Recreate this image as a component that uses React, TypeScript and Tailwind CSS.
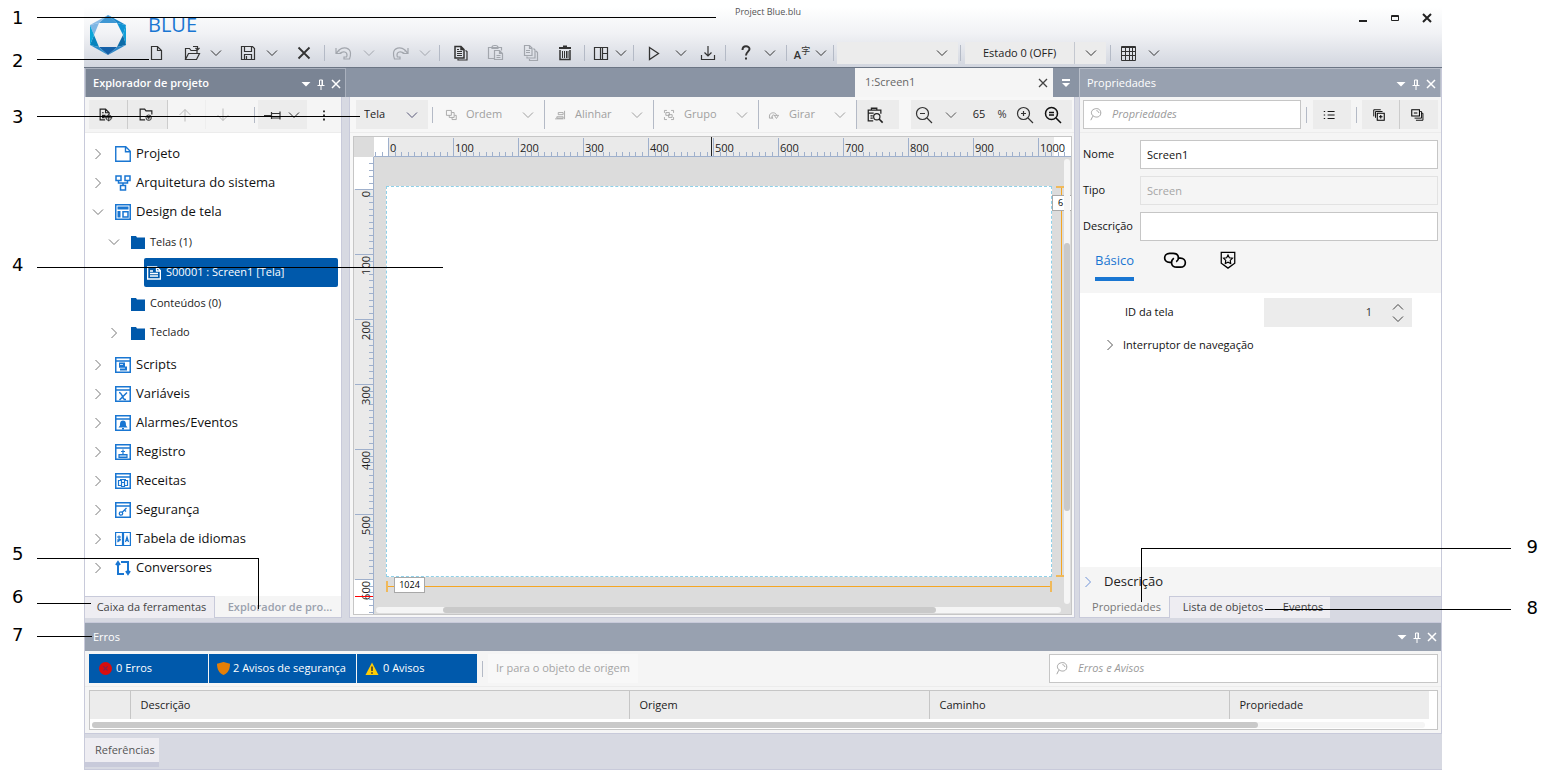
import React from 'react';

type IconName = keyof typeof ICONS;

// Every icon is drawn on a 20x20 grid with one pixel strokes.
const ICONS = {
  chevron: <path d="M5 7.5l5 5 5-5" />,
  chevronUp: <path d="M5 12.5l5-5 5 5" />,
  chevronRight: <path d="M7.5 5l5 5-5 5" />,
  file: <path strokeWidth="1.2" d="M5.5 3.5h6l4 4v9h-10zM11.5 3.5v4h4" />,
  open: <path strokeWidth="1.2" d="M3.5 16.5v-11h4l1.5 2h6v3M3.5 16.5l3-6h11l-3 6zM11 3.5h4.500v3M13.5 5l2 2 2-2" />,
  save: <path strokeWidth="1.2" d="M3.5 3.5h11l2 2v11h-13zM6.5 3.5v5h7v-5M6.5 16.5v-5h7v5M8.5 16v-3" />,
  close: <path strokeWidth="1.8" d="M4.500 4.500l11 11M15.500 4.500l-11 11" />,
  undo: <path strokeWidth="1.2" d="M3 5v5.500h5.500M3.500 10l2.500-3c5-4 11-2 11.500 3 .2 2.500-.5 4.500-1 6h-5.500v-2h3M6 7v1.500M6.500 10.500c4-3 7.500-1.500 7.500 1.500 0 1-.2 1.500-.5 2" />,
  redo: <path strokeWidth="1.2" d="M17 5v5.500h-5.500M16.500 10l-2.500-3c-5-4-11-2-11.500 3-.2 2.500.5 4.500 1 6h5.500v-2h-3M14 7v1.500M13.500 10.500c-4-3-7.500-1.500-7.500 1.500 0 1 .2 1.500.5 2" />,
  copy: (
    <>
      <path strokeWidth="1.5" d="M4 3.500h6l3 3v8.500h-9zM10 3.500v3h3" />
      <path d="M6 6.500h2M6 8.500h5M6 10.500h5M6 12.500h5" />
      <path strokeWidth="1.2" d="M14.500 7.500l1.500 1v8.500h-9v-1" />
    </>
  ),
  paste: <path strokeWidth="1.2" d="M8.5 15.5h-6v-11h13v3M6 4.500c0-1.500 1-2 2.500-2h1c1.500 0 2.500.5 2.500 2v1h-6zM8.500 7.500h5l3 3v6h-8zM13.500 7.500v3h3M10.500 12.500h4M10.500 14.500h4" />,
  pages: <path strokeWidth="1.2" d="M3.500 2.500h5l2.500 2.500v7.500h-7.500zM8.500 2.500v3h2.500M5 7.500h4M5 9.500h4M12.500 5.500l1.500 1.500v8h-8v-1.500M15 8l1.500 1.500v8h-8v-1.500" />,
  trash: (
    <>
      <path strokeWidth="2" d="M4 5h12M8 3.500h4" />
      <path strokeWidth="1.5" d="M5 7v9.500h10v-9.500" />
      <path d="M7.500 8v7M9.500 8v7M11.500 8v7M13 8v7" />
    </>
  ),
  layout: <path strokeWidth="1.2" d="M3.500 4.500h13v12h-13zM9.500 4.500v12M11.500 4.500v12M11.500 10.500h5" />,
  play: <path strokeWidth="1.3" d="M5.500 4.500l9 6-9 6z" />,
  download: <path strokeWidth="1.2" d="M3.500 12v4.500h13v-4.500M10 3v10M6.500 9.500l3.500 3.500 3.500-3.500" />,
  help: <path strokeWidth="2" d="M6.500 7c0-5 7-4.500 7-1 0 2.500-3.500 3-3.500 6.500M10 14.500v2" />,
  grid: <path d="M3.500 3.500h14v14h-14zM3.500 4.500h14M3.500 8.500h14M3.500 12.500h14M7.500 4v13M11.500 4v13M14.500 4v13" />,
  up: <path d="M10 16.500v-12M4.500 10l5.500-5.500 5.500 5.500" />,
  down: <path d="M10 3.500v12M4.500 10l5.500 5.500 5.500-5.500" />,
  pinSide: <path strokeWidth="1.2" d="M0 10.500h7M7.500 7v7M7.500 8.500h8M7.500 13h8M16 6.500v8" />,
  dots: <path strokeWidth="2" d="M10 5v2M10 9.500v2M10 14v2" />,
  newScreen: (
    <>
      <path strokeWidth="1.3" d="M9 15.500h-5.500v-12h6l4 4v2M9.500 3.500v4h4M5.500 7.500h2M5.500 10.500h4M5.500 13h3" />
      <circle cx="13" cy="13" r="3" />
      <path d="M13 9v8M9 13h8" />
    </>
  ),
  newFolder: (
    <>
      <path strokeWidth="1.3" d="M9 15.500h-5.500v-12h5l1.500 2h6.500v4" />
      <circle cx="13" cy="13" r="3" />
      <path d="M13 11v4M11 13h4" />
    </>
  ),
  order: <path strokeWidth="1.2" d="M3.500 3.500h7v7h-7zM11 6.500h3.500v7h-7v-3M15 10.500h2.500v6h-6v-3" />,
  align: <path strokeWidth="1.2" d="M16.500 4v12M7.500 6.500h7v3h-7zM5.500 12.500h9v2h-9zM3 15.500h12" />,
  group: <path strokeWidth="1.2" d="M5.500 6.500h5v4h-5zM9.500 9.500h5v4h-5zM3.500 7v-3.500h3.500M13 3.500h3.500v3.500M3.500 13v3.500h3.500M13 16.500h3.500v-3.500" />,
  rotate: <path strokeWidth="1.2" d="M3.500 14.500v-3c0-6 10-6 10-1M7.500 14.500v-3c0-2 3-2 3-.5M3.500 14.500h4M10.500 10.500h6l-3 4.500zM6 12.500l3 3" />,
  screenSearch: (
    <>
      <path strokeWidth="1.4" d="M8 16.500h-5.500v-12h14v4M6 4.500v-2h6v2M2.500 8h6M5 11h2.500M5 13.500h2.500" />
      <circle cx="12" cy="12" r="3.500" strokeWidth="1.3" />
      <path strokeWidth="1.8" d="M14.500 14.500l4 4" />
    </>
  ),
  zoomOut: (
    <>
      <circle cx="8.5" cy="8.5" r="6" strokeWidth="1.2" />
      <path strokeWidth="1.2" d="M13 13l5 5M6 8.500h5" />
    </>
  ),
  zoomIn: (
    <>
      <circle cx="8.5" cy="8.5" r="6" strokeWidth="1.2" />
      <path strokeWidth="1.2" d="M13 13l5 5M6 8.500h5M8.500 6v5" />
    </>
  ),
  zoomFit: (
    <>
      <circle cx="8.5" cy="8.5" r="6" strokeWidth="1.5" />
      <path strokeWidth="1.5" d="M13 13l5 5M6 7.500h5M6 10h5" />
    </>
  ),
  search: <path strokeWidth="1.1" d="M8 2.500c4-1.500 8 .5 8 5s-4.500 6-8 4.500c-5-2-5-8 0-9.500zM6 11.500l-2.500 5M10.500 4.500c2 .5 3 1.500 3 3" />,
  list: <path strokeWidth="1.3" d="M8 5h10M8 10h10M8 15h10M2.500 5h2M2.500 10h2M2.500 15h2" />,
  expandAll: (
    <>
      <path strokeWidth="1.3" d="M2.500 12v-9.500h10M5 14v-9h10" />
      <path strokeWidth="1.5" d="M7.500 7.500h10v10h-10zM12.500 10v5M10 12.500h5" />
    </>
  ),
  collapseAll: (
    <>
      <path strokeWidth="1.3" d="M14.500 5h2v9.500h-10M16.500 7.500h2v10h-10" />
      <path strokeWidth="1.5" d="M2.500 2.500h11v9h-11zM5.500 7h5" />
    </>
  ),
  link: <path strokeWidth="1.4" d="M7.500 12h-2c-5.500 0-5.500-7.500 0-7.500h3c5 0 5.500 5 2.500 7M12 8.500h2.500c5.500 0 5.500 7.500 0 7.500h-3c-5 0-5.500-5-2.500-7.500" />,
  badge: (
    <>
      <path strokeWidth="1.4" d="M2.500 1.500h15v12l-7.500 5.500-7.500-5.500z" />
      <path strokeWidth="1.3" d="M10 4.500l1.500 3 3.500.5-2.500 2.500.5 3.500-3-1.500-3 1.500.5-3.500-2.500-2.500 3.500-.5z" />
    </>
  ),
};

interface IconProps {
  name: IconName;
  className?: string;
}

const Icon: React.FC<IconProps> = ({ name, className = 'size-5' }) => (
  <svg viewBox="0 0 20 20" fill="none" stroke="currentColor" className={`shrink-0 ${className}`} aria-hidden="true">
    {ICONS[name]}
  </svg>
);

interface ToolProps extends IconProps {
  label: string;
  wrap: string;
}

const Tool: React.FC<ToolProps> = ({ name, label, wrap, className }) => (
  <button type="button" aria-label={label} className={`flex shrink-0 items-center justify-center ${wrap}`}>
    <Icon name={name} className={className} />
  </button>
);

const Sep = ({ className = 'mx-1 h-4' }) => <span className={`w-px shrink-0 bg-[#b4bac6] ${className}`} />;

const Logo = () => (
  <svg viewBox="0 0 36 40" className="h-10 w-9 shrink-0" aria-label="BLUE">
    <path fill="#8abce7" d="M0 10L18 0 9 8z" />
    <path fill="#7fb6e4" d="M0 10L9 8 4 20z" />
    <path fill="#3f97d3" d="M18 0L9 8h18z" />
    <path fill="#1b86c9" d="M18 0l18 10-9-2z" />
    <path fill="#0e93d4" d="M36 10l-9-2 6 12z" />
    <path fill="#0f9fd8" d="M36 10v20l-3-10z" />
    <path fill="#0c6ba8" d="M36 30l-3-10-6 12z" />
    <path fill="#2b86c6" d="M36 30L18 40l9-8z" />
    <path fill="#1560a8" d="M18 40l-9-8h18z" />
    <path fill="#2a8ecb" d="M18 40L0 30l9 2z" />
    <path fill="#0684bd" d="M0 30l9 2-5-12z" />
    <path fill="#0aa6d9" d="M0 10v20l4-10z" />
  </svg>
);

const Header = () => (
  <header className="flex h-17 flex-col border-b border-[#6b7584] bg-linear-to-b from-white from-10% via-[#f1f2f5] via-50% to-[#d2d6df] text-[#333]">
    <div className="relative flex h-10 items-start">
      <div className="absolute left-1.5 top-[15px]">
        <Logo />
      </div>
      <h1 className="ml-16 mt-[13px] text-[20px] leading-6 text-[#1976d2]">BLUE</h1>
      <p className="absolute inset-x-0 top-1 pl-2.5 text-center text-[9px] leading-4 text-[#555]">Project Blue.blu</p>
      <div className="ml-auto mr-[5px] mt-3 flex items-center">
        <button type="button" aria-label="Minimizar" className="flex w-5 justify-center">
          <svg viewBox="0 0 12 12" className="size-3" stroke="#222" strokeWidth="2"><path d="M2 9h8" /></svg>
        </button>
        <button type="button" aria-label="Maximizar" className="ml-3 flex w-5 justify-center">
          <svg viewBox="0 0 12 12" className="size-3" stroke="#222" fill="none"><path d="M2.500 3.500h7v5h-7zM2 4.500h8" /></svg>
        </button>
        <button type="button" aria-label="Fechar" className="ml-3 flex w-5 justify-center">
          <svg viewBox="0 0 12 12" className="size-3" stroke="#222" strokeWidth="2"><path d="M2 2l8 8M10 2l-8 8" /></svg>
        </button>
      </div>
    </div>
    <div className="ml-14 flex h-[26px] items-center">
      <Tool name="file" label="Novo" wrap="w-8" />
      <Tool name="open" label="Abrir" wrap="ml-1 w-8" />
      <Tool name="chevron" label="Abrir recentes" wrap="w-4" />
      <Tool name="save" label="Salvar" wrap="ml-2 w-8" />
      <Tool name="chevron" label="Opções de salvar" wrap="w-4" />
      <Tool name="close" label="Excluir" wrap="ml-2 w-8" />
      <Sep />
      <Tool name="undo" label="Desfazer" wrap="w-7 text-[#a2a6ad]" />
      <Tool name="chevron" label="Lista desfazer" wrap="ml-0.5 w-5 text-[#a2a6ad]" />
      <Tool name="redo" label="Refazer" wrap="ml-1.5 w-8 text-[#a2a6ad]" />
      <Tool name="chevron" label="Lista refazer" wrap="w-4 text-[#a2a6ad]" />
      <Sep className="ml-1.5 mr-[3px] h-4" />
      <Tool name="copy" label="Copiar" wrap="w-[35px]" />
      <Tool name="paste" label="Colar" wrap="w-[35px] text-[#a2a6ad]" />
      <Tool name="pages" label="Duplicar" wrap="w-[35px] text-[#a2a6ad]" />
      <Tool name="trash" label="Lixeira" wrap="w-[34px]" />
      <Sep className="mx-0.5 h-4" />
      <Tool name="layout" label="Layout" wrap="w-7" />
      <Tool name="chevron" label="Opções de layout" wrap="w-3" />
      <Sep className="ml-1.5 mr-1 h-4" />
      <Tool name="play" label="Executar" wrap="w-8" />
      <Tool name="chevron" label="Opções de execução" wrap="w-[22px]" />
      <Tool name="download" label="Baixar" wrap="w-8" />
      <Sep className="ml-px mr-1 h-4" />
      <Tool name="help" label="Ajuda" wrap="w-8" />
      <Tool name="chevron" label="Opções de ajuda" wrap="w-4" />
      <Sep className="ml-2 mr-1 h-4" />
      <button type="button" aria-label="Idioma" className="flex w-[22px] shrink-0 justify-center">
        <span className="mt-1 text-[11px] font-semibold leading-3">A</span>
        <span className="mb-1 font-['Noto_Sans_CJK_SC',sans-serif] text-[9px] leading-3">字</span>
      </button>
      <Tool name="chevron" label="Lista de idiomas" wrap="w-4" />
      <Sep className="ml-1 mr-[3px] h-4" />
      <label className="relative flex h-[22px] w-[121px] items-center bg-[#ececec]">
        <select aria-label="Idioma do texto" className="size-full appearance-none" defaultValue="">
          <option value="" />
        </select>
        <Icon name="chevron" className="pointer-events-none absolute right-1.5 size-5" />
      </label>
      <Sep className="ml-0.5 mr-1 h-4" />
      <label className="relative flex h-[22px] w-[141px] items-center bg-[#ececec]">
        <select aria-label="Estado" className="size-full appearance-none pl-[18px] text-[11px] text-[#222]">
          <option>Estado 0 (OFF)</option>
        </select>
        <span className="pointer-events-none absolute right-0 flex h-full w-8 items-center justify-center border-l border-[#c4c8d0]">
          <Icon name="chevron" />
        </span>
      </label>
      <Sep className="ml-1 mr-[3px] h-4" />
      <Tool name="grid" label="Grade" wrap="w-7" />
      <Tool name="chevron" label="Opções de grade" wrap="w-6" />
    </div>
  </header>
);

const PanelControls = () => (
  <div className="ml-auto flex items-center">
    <button type="button" aria-label="Menu do painel" className="flex w-4 justify-center">
      <svg viewBox="0 0 10 10" className="size-2.5" fill="#fff"><path d="M.5 3h9L5 7.500z" /></svg>
    </button>
    <button type="button" aria-label="Fixar" className="flex w-3.5 justify-center">
      <svg viewBox="0 0 10 12" className="h-3 w-2.5" fill="none" stroke="#fff"><path d="M3.500 7v-5h3v5M6 2v5M1.500 7.500h7M5 8v4" /></svg>
    </button>
    <button type="button" aria-label="Fechar painel" className="flex w-4 justify-center">
      <svg viewBox="0 0 10 10" className="size-2.5" fill="none" stroke="#fff" strokeWidth="1.5"><path d="M1 1l8 8M9 1L1 9" /></svg>
    </button>
  </div>
);

// Glyphs drawn inside the shared window frame of the tree icons.
const TREE_GLYPHS = {
  scripts: <path fill="#1976d2" stroke="none" d="M4 5.500h6v4h2v4H5v-2h5v-.800H4zM5 7v.800h3V7z" />,
  variables: <path strokeWidth="1.5" d="M4 6.500c2 0 2 1 3.500 4s1.500 3 3.500 3M12 6.500L4.500 14" />,
  alarms: <path fill="#1976d2" stroke="none" d="M8 5.500c3 0 3 3 3 5l1.500 2h-9l1.500-2c0-2 0-5 3-5zM7 13h2v1.500H7z" />,
  log: <path strokeWidth="1.2" d="M8 5.500v5M6 7.500h4M4 10.500h8v3H4zM4 12h8" />,
  recipes: <path strokeWidth="1.2" d="M3.500 7.500h3v5h-3zM6.500 9.500h3v4h-3zM9.500 7.500h3v5h-3zM5 6.500h6" />,
  security: (
    <>
      <circle cx="6" cy="11.500" r="1.700" strokeWidth="1.300" />
      <path strokeWidth="1.3" d="M7 10.500l4.500-4.500M9.500 8l1.500 1.500" />
    </>
  ),
};

type GlyphName = keyof typeof TREE_GLYPHS;

const FrameIcon = ({ glyph }: { glyph: GlyphName }) => (
  <svg viewBox="0 0 16 16" className="size-4 shrink-0" fill="none" stroke="#1976d2">
    <path strokeWidth="1.5" d="M.75.75h14.500v14.500H.75z" />
    <path strokeWidth="1.5" d="M1 4h14" />
    {TREE_GLYPHS[glyph]}
  </svg>
);

const blueIcon = (children: React.ReactNode) => (
  <svg viewBox="0 0 16 16" className="size-4 shrink-0" fill="none" stroke="#1976d2">
    {children}
  </svg>
);

const projectIcon = blueIcon(<path strokeWidth="1.4" d="M.75.75h10l4.500 4.500v10H.75zM10.500.75v5h5" />);
const systemIcon = blueIcon(
  <path strokeWidth="1.5" d="M1 1h5v4.500H1zM10 1h5v4.500h-5zM5.500 10.500h5v4.500h-5zM3.500 6v2h9v-2M8 8v2.500" />,
);
const designIcon = blueIcon(
  <>
    <path strokeWidth="1.5" d="M.75.75h14.500v14.500H.75z" />
    <path fill="#1976d2" stroke="none" d="M2.500 2.500h11v3h-11zM2.500 7h3v6.500h-3z" />
    <path strokeWidth="1.5" d="M8 7.700h5v5.200H8z" />
  </>,
);
const languageIcon = blueIcon(
  <>
    <path strokeWidth="1.2" d="M.6 1.500h6.900v13H.6zM8.500 1.500h6.900v13H8.500z" />
    <path strokeWidth="1.2" d="M2 6h4M2 9h4M4 4.500v6M2.500 11l3-3M10.500 11l1.500-5 1.500 5M11 9.500h2" />
  </>,
);
const convertIcon = blueIcon(
  <path strokeWidth="2" d="M1 5l2-3 2 3M3 3v11h6M6 2h7v10M11 11l2 3 2-3" />,
);
const folderIcon = (
  <svg viewBox="0 0 14 14" className="size-3.5 shrink-0" fill="#0059ab"><path d="M0 1h5l1 1.500h8V14H0z" /></svg>
);

interface TreeRowProps {
  icon: React.ReactNode;
  text: string;
  open?: boolean;
}

const TreeRow: React.FC<TreeRowProps> = ({ icon, text, open = false }) => (
  <li className="flex h-[29px] items-center pl-[3px]">
    <Icon name={open ? 'chevron' : 'chevronRight'} className="mr-[7px] size-5 text-[#777]" />
    {icon}
    <span className="ml-[5px] text-[13px] text-[#111]">{text}</span>
  </li>
);

const SECTIONS: { glyph: GlyphName; text: string }[] = [
  { glyph: 'scripts', text: 'Scripts' },
  { glyph: 'variables', text: 'Variáveis' },
  { glyph: 'alarms', text: 'Alarmes/Eventos' },
  { glyph: 'log', text: 'Registro' },
  { glyph: 'recipes', text: 'Receitas' },
  { glyph: 'security', text: 'Segurança' },
];

const ProjectExplorer = () => (
  <aside className="flex w-[262px] shrink-0 flex-col border-l border-[#c8cada]">
    <div className="flex h-[29px] items-center border-x border-t border-[#a9b0bd] bg-[#7a8494] pl-[7px] pr-px pt-px">
      <h2 className="text-[11px] font-semibold text-white">Explorador de projeto</h2>
      <PanelControls />
    </div>
    <div className="mr-1 flex flex-1 flex-col border-r border-[#c8cada]">
      <div className="flex h-9 items-center border-b border-[#ececec] bg-[#f5f5f5] pl-1">
        <Tool name="newScreen" label="Nova tela" wrap="h-[29px] w-[39px] border-r border-[#ccc] bg-[#ececec] pr-1 text-[#222]" className="size-4.5" />
        <Tool name="newFolder" label="Nova pasta" wrap="h-[29px] w-10 border-r border-[#ccc] bg-[#ececec] pr-1 text-[#222]" className="size-4.5" />
        <Tool name="up" label="Mover para cima" wrap="h-[29px] w-[38px] border-r border-[#eee] pr-1 text-[#bbb]" />
        <Tool name="down" label="Mover para baixo" wrap="h-[29px] w-[38px] pr-1 text-[#bbb]" />
        <Sep className="ml-2.5 mr-[3px] h-4" />
        <div className="flex h-[29px] w-[52px] items-center bg-[#ececec] text-[#333]">
          <Tool name="pinSide" label="Posição" wrap="w-7 pl-1" />
          <Tool name="chevron" label="Opções de posição" wrap="w-4" />
        </div>
        <Tool name="dots" label="Mais" wrap="w-[34px] text-[#222]" className="size-4.5" />
      </div>
      <ul className="flex-1 bg-white pt-[6px]">
        <TreeRow icon={projectIcon} text="Projeto" />
        <TreeRow icon={systemIcon} text="Arquitetura do sistema" />
        <TreeRow icon={designIcon} text="Design de tela" open />
        <li>
          <ul className="flex flex-col pb-[3px] pl-[19px] text-[11px] text-[#222]">
            <li className="flex h-8 items-center">
              <Icon name="chevron" className="mr-[7px] size-5 text-[#777]" />
              {folderIcon}
              <span className="ml-[5px]">Telas (1)</span>
            </li>
            <li className="mb-0.5 ml-10 mr-[3px] flex h-[29px] items-center rounded-xs bg-[#0059ab] pl-[3px] text-white">
              <svg viewBox="0 0 14 14" className="size-3.5" fill="none" stroke="#fff">
                <path strokeWidth="1.3" d="M.65 1h9l3.700 3.500v8.500H.65zM9.500 1v4h4M3 5h3M3 7.500h8M3 10h8" />
              </svg>
              <span className="ml-[5px]">S00001 : Screen1 [Tela]</span>
            </li>
            <li className="flex h-[29px] items-center pl-[27px]">
              {folderIcon}
              <span className="ml-[5px]">Conteúdos (0)</span>
            </li>
            <li className="flex h-[29px] items-center">
              <Icon name="chevronRight" className="mr-[7px] size-5 text-[#777]" />
              {folderIcon}
              <span className="ml-[5px]">Teclado</span>
            </li>
          </ul>
        </li>
        {SECTIONS.map((s) => (
          <TreeRow key={s.text} icon={<FrameIcon glyph={s.glyph} />} text={s.text} />
        ))}
        <TreeRow icon={languageIcon} text="Tabela de idiomas" />
        <TreeRow icon={convertIcon} text="Conversores" />
      </ul>
    </div>
    <div className="mb-1 flex h-[22px] text-[11px]">
      <button type="button" className="w-[130px] whitespace-nowrap border-r border-t border-[#c8cada] bg-[#eeedf2] pl-1 text-[#444]">
        Caixa da ferramentas
      </button>
      <button type="button" className="w-[127px] whitespace-nowrap border-b border-r border-[#c8cada] bg-[#f5f5f5] pl-1 pt-px font-semibold text-[#9aa1ad]">
        Explorador de pro...
      </button>
    </div>
  </aside>
);

interface DisabledMenuProps {
  icon: IconName;
  text: string;
  wrap: string;
}

const DisabledMenu: React.FC<DisabledMenuProps> = ({ icon, text, wrap }) => (
  <button type="button" disabled className={`flex h-[29px] shrink-0 items-center border-r border-[#b4bac6] pl-2 text-[#a0a0a0] ${wrap}`}>
    <Icon name={icon} className="mr-2 size-3.5" />
    {text}
    <Icon name="chevron" className="ml-auto mr-1.5 size-5" />
  </button>
);

const SCALE = 65;
const MAJORS = [0, 1, 2, 3, 4, 5, 6, 7, 8, 9, 10];

const HorizontalRuler = () => (
  <svg className="h-5 w-full border-b border-[#9fb0cc]" shapeRendering="crispEdges">
    <rect width="100%" height="20" fill="#fff" />
    <rect x="14" width="666" height="20" fill="#eaeaea" />
    {Array.from({ length: 108 }, (_, i) => Math.round(14 + (i - 2) * 6.5)).map((x) => (
      <path key={x} d={`M${x}.5 15v5`} stroke="#9fb0cc" />
    ))}
    {MAJORS.map((m) => (
      <g key={m}>
        <path d={`M${m * SCALE + 14}.5 1v19`} stroke="#9fb0cc" />
        <text x={m * SCALE + 16} y="15" fontSize="11" fill="#222">{m * 100}</text>
      </g>
    ))}
    <path d="M337.500 0v20" stroke="#222" />
  </svg>
);

const VerticalRuler = () => (
  <svg className="h-full w-5 border-r border-[#9fb0cc]" shapeRendering="crispEdges">
    <rect width="20" height="100%" fill="#fff" />
    <rect y="32" width="20" height="391" fill="#eaeaea" />
    {Array.from({ length: 70 }, (_, i) => Math.round(32 + (i - 4) * 6.5)).map((y) => (
      <path key={y} d={`M15 ${y}.5h5`} stroke="#9fb0cc" />
    ))}
    {MAJORS.slice(0, 7).map((m) => (
      <g key={m}>
        <path d={`M1 ${m * SCALE + 32}.5h19`} stroke="#9fb0cc" />
        <text transform={`translate(16 ${m * SCALE + 34}) rotate(-90)`} textAnchor="end" fontSize="11" fill="#222">
          {m * 100}
        </text>
      </g>
    ))}
    <path d="M1 439.500h19" stroke="#f00" />
  </svg>
);

const Editor = () => (
  <section className="flex min-w-0 flex-1 flex-col">
    <div className="flex h-[29px] bg-[#8a94a4]">
      <div className="ml-auto flex w-[198px] items-center bg-[#f5f5f5] pl-2.5 pr-1 text-[11px] text-[#666]">
        1:Screen1
        <button type="button" aria-label="Fechar aba" className="ml-auto text-[#444]">
          <svg viewBox="0 0 12 12" className="size-3" fill="none" stroke="currentColor" strokeWidth="1.3"><path d="M2 2l8 8M10 2l-8 8" /></svg>
        </button>
      </div>
      <button type="button" aria-label="Lista de abas" className="flex w-[26px] items-center justify-center">
        <svg viewBox="0 0 10 10" className="size-2.5" fill="#fff"><path d="M1 1h8v2H1zM1 5h8L5 9z" /></svg>
      </button>
    </div>
    <div className="mb-1 ml-[3px] mr-1 flex flex-1 flex-col border-x border-b border-[#c8cada] bg-[#f7f7f7]">
      <div className="flex h-9 items-center border-b border-[#ececec] text-[11px]">
        <label className="relative ml-1.5 flex h-[29px] w-[72px] shrink-0 items-center bg-[#ececec]">
          <select aria-label="Modo de edição" className="size-full appearance-none pl-2 text-[#222]">
            <option>Tela</option>
          </select>
          <Icon name="chevron" className="pointer-events-none absolute right-1.5 size-5 text-[#557]" />
        </label>
        <Sep className="ml-1 mr-[3px] h-4" />
        <DisabledMenu icon="order" text="Ordem" wrap="w-[109px]" />
        <DisabledMenu icon="align" text="Alinhar" wrap="w-[109px]" />
        <DisabledMenu icon="group" text="Grupo" wrap="w-[105px]" />
        <DisabledMenu icon="rotate" text="Girar" wrap="w-[98px]" />
        <Tool name="screenSearch" label="Pré-visualizar" wrap="h-[29px] w-[42px] bg-[#ececec] pr-1.5 text-[#222]" className="size-4.5" />
        <div className="ml-auto mr-0.5 flex h-[29px] items-center bg-[#ececec] pr-[5px] text-[#333]">
          <Tool name="zoomOut" label="Reduzir" wrap="w-[26px]" />
          <Tool name="chevron" label="Níveis de zoom" wrap="w-7 text-[#555]" />
          <input aria-label="Zoom" defaultValue="65" className="w-7 text-center text-[#222]" />
          <span className="w-[18px] text-center">%</span>
          <Tool name="zoomIn" label="Ampliar" wrap="w-7" />
          <Tool name="zoomFit" label="Ajustar" wrap="w-7 text-[#111]" />
        </div>
      </div>
      <div className="mb-0.5 ml-[3px] mr-0.5 mt-[3px] grid flex-1 grid-cols-[20px_minmax(0,1fr)] grid-rows-[20px_minmax(0,1fr)] border border-[#c6c6c6] bg-[#dcdcdc]">
        <span />
        <HorizontalRuler />
        <VerticalRuler />
        <div className="relative min-h-[456px] overflow-hidden">
          <div className="absolute left-3 top-[29px] h-[391px] w-[666px] border border-dashed border-[#8fd0e8] bg-white" />
          {/* dimension lines */}
          <div className="absolute left-3 top-[429px] h-px w-[666px] bg-[#f5a623]" />
          <div className="absolute left-3 top-[424px] h-[11px] w-0.5 bg-[#f0b95a]" />
          <div className="absolute left-[676px] top-[424px] h-[11px] w-0.5 bg-[#f0b95a]" />
          <div className="absolute left-5 top-[420px] flex h-4 w-[31px] items-center justify-center border border-[#a8a8a8] bg-white text-[9px]">1024</div>
          <div className="absolute left-[687px] top-[29px] h-[391px] w-px bg-[#f5a623]" />
          <div className="absolute left-[682px] top-[29px] h-0.5 w-[11px] bg-[#f0b95a]" />
          <div className="absolute left-[682px] top-[418px] h-0.5 w-[11px] bg-[#f0b95a]" />
          <div className="absolute left-[678px] top-[38px] flex h-4 w-6 items-center border border-[#a8a8a8] bg-white pl-[5px] text-[9px]">6</div>
          {/* scroll bars */}
          <div className="absolute bottom-2.5 right-px top-0.5 w-1.5 rounded-full bg-[#f5f5f5]">
            <div className="mt-[84px] h-[268px] rounded-full bg-[#c9c9c9]" />
          </div>
          <div className="absolute bottom-px left-0.5 right-2.5 h-1.5 rounded-full bg-[#f5f5f5]">
            <div className="ml-[67px] h-full w-[493px] rounded-full bg-[#c9c9c9]" />
          </div>
        </div>
      </div>
    </div>
  </section>
);

interface SearchBoxProps {
  id: string;
  placeholder: string;
  className: string;
}

const SearchBox: React.FC<SearchBoxProps> = ({ id, placeholder, className }) => (
  <label htmlFor={id} className={`flex h-[29px] items-center border border-[#c6c6c6] bg-white pl-1 ${className}`}>
    <Icon name="search" className="size-4 text-[#999]" />
    <input id={id} placeholder={placeholder} className="ml-2 min-w-0 flex-1 text-[11px] italic outline-none placeholder:text-[#9a9a9a]" />
  </label>
);

const Properties = () => (
  <aside className="flex w-[363px] shrink-0 flex-col border-r border-[#c8cada]">
    <div className="flex h-[29px] items-center border-x border-t border-[#b9bfca] bg-[#98a1b0] pl-[7px] pr-px pt-px">
      <h2 className="text-[11px] text-white">Propriedades</h2>
      <PanelControls />
    </div>
    <div className="flex flex-1 flex-col border-l border-[#c8cada] bg-[#f5f5f5]">
      <div className="flex h-9 shrink-0 items-center border-b border-[#ececec] pl-[3px] pr-[3px]">
        <SearchBox id="prop-search" placeholder="Propriedades" className="min-w-0 flex-1" />
        <Sep className="ml-[5px] mr-1.5 h-4" />
        <Tool name="list" label="Lista" wrap="h-[29px] w-[38px] bg-[#ececec] pr-1.5" className="size-3.5" />
        <Sep className="mx-[5px] h-4" />
        <Tool name="expandAll" label="Expandir tudo" wrap="h-[29px] w-[38px] border-r border-[#ccc] bg-[#ececec] pr-1" className="size-3.5" />
        <Tool name="collapseAll" label="Recolher tudo" wrap="h-[29px] w-[38px] bg-[#ececec] pr-1" className="size-3.5" />
      </div>
      <div className="grid grid-cols-[57px_1fr] items-center gap-y-[7px] py-[7px] pl-[3px] pr-[3px] text-[11px] text-[#111]">
        <label htmlFor="nome">Nome</label>
        <input id="nome" defaultValue="Screen1" className="h-[29px] min-w-0 border border-[#c6c6c6] bg-white px-1.5" />
        <label htmlFor="tipo">Tipo</label>
        <input id="tipo" defaultValue="Screen" disabled className="h-[29px] min-w-0 border border-[#e2e2e2] px-1.5 text-[#a5a5a5]" />
        <label htmlFor="descricao">Descrição</label>
        <input id="descricao" className="h-[29px] min-w-0 border border-[#c6c6c6] bg-white px-1.5" />
      </div>
      <div className="flex h-[45px] items-start pl-[15px]">
        <button type="button" className="h-[33px] border-b-4 border-[#1976d2] pb-1 text-[13px] text-[#1976d2]">Básico</button>
        <Tool name="link" label="Vínculos" wrap="ml-[29px] mt-0.5 h-5" className="size-6" />
        <Tool name="badge" label="Segurança" wrap="ml-8 mt-0.5 h-5" className="size-4.5" />
      </div>
      <div className="flex flex-1 flex-col bg-white pt-[5px] text-[11px] text-[#111]">
        <div className="flex h-[29px] items-center pl-[45px]">
          <label htmlFor="tela-id" className="flex-1">ID da tela</label>
          <div className="mr-[29px] flex h-full w-[148px] items-center bg-[#ececec]">
            <input id="tela-id" defaultValue="1" className="min-w-0 flex-1 text-right text-[#333]" />
            <div className="ml-4 mr-1 flex flex-col text-[#444]">
              <button type="button" aria-label="Aumentar" className="h-3 overflow-hidden"><Icon name="chevronUp" className="-my-1 size-5" /></button>
              <button type="button" aria-label="Diminuir" className="h-3 overflow-hidden"><Icon name="chevron" className="-my-1 size-5" /></button>
            </div>
          </div>
        </div>
        <button type="button" className="mt-1 flex h-7 items-center pl-5 text-left">
          <Icon name="chevronRight" className="mr-[3px] size-5 text-[#555]" />
          Interruptor de navegação
        </button>
      </div>
      <button type="button" className="flex h-[29px] shrink-0 items-center text-[13px] text-[#222]">
        <Icon name="chevronRight" className="-ml-0.5 mr-1.5 size-5 text-[#6f93d8]" />
        Descrição
      </button>
    </div>
    <div className="mb-1 flex h-[22px] text-[11px] text-[#444]">
      <button type="button" className="w-[90px] border-b border-l border-[#c8cada] bg-[#f5f5f5] pl-1 pt-px text-[#777]">Propriedades</button>
      <button type="button" className="w-[107px] border-l border-t border-[#c8cada] bg-[#eeedf2]">Lista de objetos</button>
      <button type="button" className="w-[54px] border-t border-[#c8cada] bg-[#eeedf2]">Eventos</button>
      <span className="flex-1 border-t border-[#c8cada]" />
    </div>
  </aside>
);

const Errors = () => (
  <section className="border border-[#c8cada] bg-[#f5f5f5] text-[11px]">
    <div className="flex h-[28px] items-center bg-[#98a1b0] pl-2 pr-px text-white">
      <h2>Erros</h2>
      <PanelControls />
    </div>
    <div className="flex h-9 items-center border-b border-[#ececec] pl-1 pr-[3px] text-white">
      <button type="button" className="flex h-[29px] w-[119px] shrink-0 items-center bg-[#0059ab] pl-2.5">
        <svg viewBox="0 0 12 12" className="mr-1 size-[13px]"><circle cx="6" cy="6" r="6" fill="#d90d0d" /><path stroke="#7c2350" d="M4 4l4 4M8 4L4 8" /></svg>
        0 Erros
      </button>
      <button type="button" className="ml-px flex h-[29px] w-[147px] shrink-0 items-center whitespace-nowrap bg-[#0059ab] pl-2">
        <svg viewBox="0 0 12 12" className="mr-[3px] size-[13px]" fill="#e57f07"><path d="M0 1.500L6 0l6 1.500C12 7 10 10 6 12 2 10 0 7 0 1.500z" /></svg>
        2 Avisos de segurança
      </button>
      <button type="button" className="ml-px flex h-[29px] w-[120px] shrink-0 items-center bg-[#0059ab] pl-2">
        <svg viewBox="0 0 14 14" className="mr-1 size-3.5"><path fill="#ffcd05" d="M7 .5l6.500 12.500H.5z" /><path stroke="#333" strokeWidth="1.5" d="M7 4.500v4.500M7 10.200v1.500" /></svg>
        0 Avisos
      </button>
      <Sep className="mx-[5px] h-4" />
      <button type="button" disabled className="h-[29px] bg-[#f8f8f8] px-2 text-[#a5a5a5]">Ir para o objeto de origem</button>
      <SearchBox id="error-search" placeholder="Erros e Avisos" className="ml-auto w-[389px]" />
    </div>
    <div className="mb-[3px] ml-1 mr-[3px] mt-[3px] border border-[#c6c6c6] bg-white">
      <div className="pr-2">
        <table className="w-full table-fixed border-collapse bg-[#ececec] text-left text-[#222]">
          <thead>
            <tr className="h-7">
              <th className="w-10 border-r border-[#c6c6c6]" />
              <th className="border-r border-[#c6c6c6] px-2.5 font-normal">Descrição</th>
              <th className="w-[300px] border-r border-[#c6c6c6] px-2.5 font-normal">Origem</th>
              <th className="w-[300px] border-r border-[#c6c6c6] px-2.5 font-normal">Caminho</th>
              <th className="w-[200px] px-2.5 font-normal">Propriedade</th>
            </tr>
          </thead>
        </table>
      </div>
      <div className="mb-px ml-0.5 mr-3 mt-[3px] h-1.5 rounded-full bg-[#f5f5f5]">
        <div className="h-full w-7/8 rounded-full bg-[#c9c9c9]" />
      </div>
    </div>
  </section>
);

const NUMBER = "absolute text-[18px] leading-6 font-['DejaVu_Sans']";
const LINE = 'absolute bg-black';

// Numbered callouts that point at parts of the window.
const Callouts = () => (
  <div className="pointer-events-none absolute inset-0 overflow-hidden text-black">
    <span className={`${NUMBER} left-3 top-1.5`}>1</span>
    <i className={`${LINE} left-[37px] top-[17px] h-px w-[679px]`} />
    <span className={`${NUMBER} left-3 top-[49px]`}>2</span>
    <i className={`${LINE} left-[37px] top-[59px] h-px w-[112px]`} />
    <span className={`${NUMBER} left-3 top-[105px]`}>3</span>
    <i className={`${LINE} left-[37px] top-[116px] h-px w-[323px]`} />
    <span className={`${NUMBER} left-3 top-[253px]`}>4</span>
    <i className={`${LINE} left-[37px] top-[267px] h-px w-[406px]`} />
    <span className={`${NUMBER} left-3 top-[542px]`}>5</span>
    <i className={`${LINE} left-[37px] top-[558px] h-px w-[222px]`} />
    <i className={`${LINE} left-[258px] top-[558px] h-[51px] w-px`} />
    <span className={`${NUMBER} left-3 top-[585px]`}>6</span>
    <i className={`${LINE} left-[37px] top-[603px] h-px w-[54px]`} />
    <span className={`${NUMBER} left-3 top-[623px]`}>7</span>
    <i className={`${LINE} left-[37px] top-[636px] h-px w-[55px]`} />
    <span className={`${NUMBER} right-3 top-[596px]`}>8</span>
    <i className={`${LINE} right-[39px] top-[609px] h-px w-[246px]`} />
    <span className={`${NUMBER} right-3 top-[535px]`}>9</span>
    <i className={`${LINE} right-[39px] top-[548px] h-px w-[370px]`} />
    <i className={`${LINE} right-[408px] top-[548px] h-[54px] w-px`} />
  </div>
);

export default function App() {
  return (
    <div className="relative flex min-h-screen flex-col bg-white pl-[84px] pr-[108px] font-['Open_Sans','Noto_Sans',sans-serif]">
      <Header />
      <main className="flex flex-1 flex-col bg-[#d7d9e2]">
        <div className="flex flex-1">
          <ProjectExplorer />
          <Editor />
          <Properties />
        </div>
        <Errors />
      </main>
      <footer className="flex h-9 items-start border-b border-l border-[#c8cada] bg-[#d7d9e2] pt-1">
        <button type="button" className="h-[29px] border-b-5 border-[#c8cada] bg-[#eeedf2] pl-2.5 pr-1 text-[11px] text-[#555]">
          Referências
        </button>
      </footer>
      <Callouts />
    </div>
  );
}
